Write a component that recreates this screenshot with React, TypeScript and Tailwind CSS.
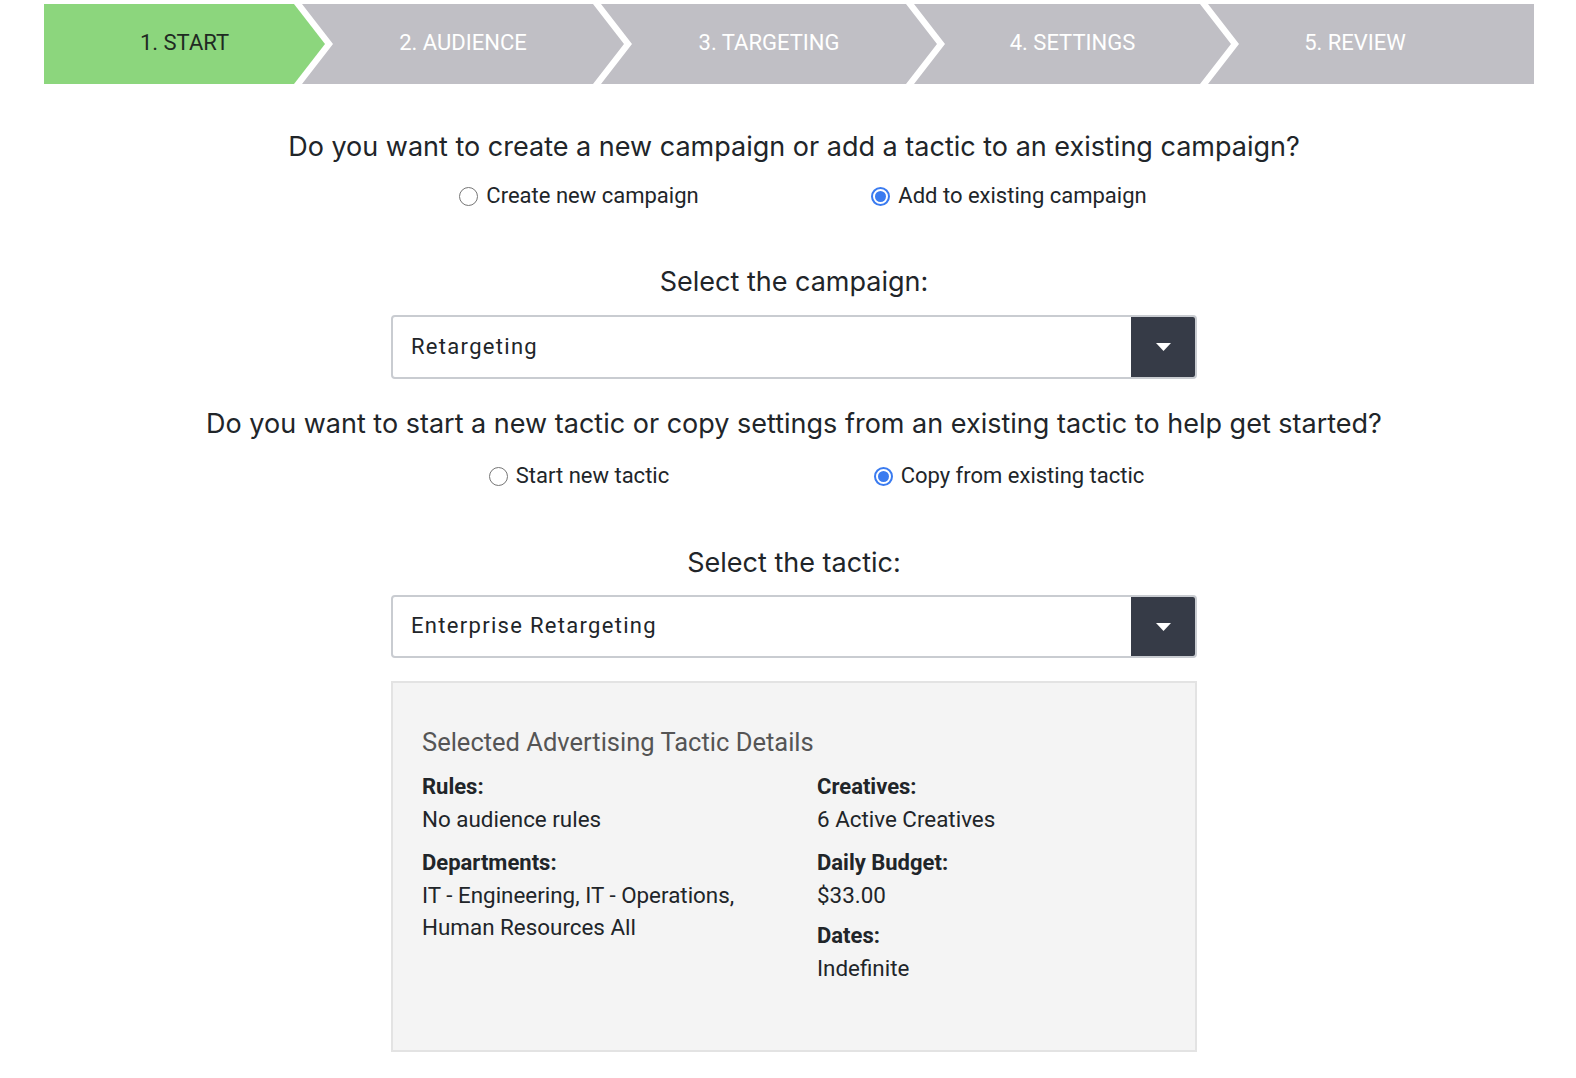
import React, { useState } from 'react';

type Step = { label: string; width: string; clip: string; extra: string };

const steps: Step[] = [
  {
    label: '1. START',
    width: 'w-[281px]',
    clip: '[clip-path:polygon(0_0,calc(100%-31px)_0,100%_50%,calc(100%-31px)_100%,0_100%)]',
    extra: 'bg-[#8cd67d] text-[#1f2a22]',
  },
  {
    label: '2. AUDIENCE',
    width: 'w-[322px] -ml-[23px]',
    clip: '[clip-path:polygon(0_0,calc(100%-31px)_0,100%_50%,calc(100%-31px)_100%,0_100%,31px_50%)]',
    extra: 'bg-[#c0bfc5] text-white',
  },
  {
    label: '3. TARGETING',
    width: 'w-[336px] -ml-[23px]',
    clip: '[clip-path:polygon(0_0,calc(100%-31px)_0,100%_50%,calc(100%-31px)_100%,0_100%,31px_50%)]',
    extra: 'bg-[#c0bfc5] text-white',
  },
  {
    label: '4. SETTINGS',
    width: 'w-[317px] -ml-[23px]',
    clip: '[clip-path:polygon(0_0,calc(100%-31px)_0,100%_50%,calc(100%-31px)_100%,0_100%,31px_50%)]',
    extra: 'bg-[#c0bfc5] text-white',
  },
  {
    label: '5. REVIEW',
    width: 'flex-1 -ml-[23px] pr-[32px]',
    clip: '[clip-path:polygon(0_0,100%_0,100%_100%,0_100%,31px_50%)]',
    extra: 'bg-[#c0bfc5] text-white',
  },
];

const Radio: React.FC<{ checked: boolean; label: string; onClick: () => void }> = ({
  checked,
  label,
  onClick,
}) => (
  <button type="button" onClick={onClick} className="flex items-center gap-[8px]">
    {checked ? (
      <span className="w-[19px] h-[19px] rounded-full border-[2px] border-[#3a7bf0] flex items-center justify-center bg-white">
        <span className="w-[11px] h-[11px] rounded-full bg-[#3a7bf0]" />
      </span>
    ) : (
      <span className="w-[19px] h-[19px] rounded-full border-[1.5px] border-[#767676] bg-white" />
    )}
    <span className="text-[22px] leading-[30px] text-[#212529]">{label}</span>
  </button>
);

const Dropdown: React.FC<{ value: string; height: string }> = ({ value, height }) => (
  <div
    className={`w-[806px] ${height} border-[2px] border-[#c9ccd1] rounded-[4px] flex items-stretch bg-white overflow-hidden`}
  >
    <div className="flex-1 flex items-center pl-[18px] pb-[2px] text-[22px] tracking-[1.3px] text-[#212529]">
      {value}
    </div>
    <div className="w-[64px] bg-[#363b47] flex items-center justify-center">
      <svg width="15" height="8" viewBox="0 0 15 8">
        <path d="M0 0 L15 0 L7.5 8 Z" fill="#ffffff" />
      </svg>
    </div>
  </div>
);

const Field: React.FC<{ label: string; lines: string[]; className?: string }> = ({
  label,
  lines,
  className = '',
}) => (
  <div className={className}>
    <div className="text-[22px] leading-[32px] font-bold text-[#212529]">{label}</div>
    {lines.map((l) => (
      <div key={l} className="text-[22.4px] leading-[32px] text-[#212529]">
        {l}
      </div>
    ))}
  </div>
);

const App: React.FC = () => {
  const [campaignMode, setCampaignMode] = useState('existing');
  const [tacticMode, setTacticMode] = useState('copy');

  return (
    <div className="min-h-screen bg-white font-['Roboto',sans-serif]">
      <div className="pt-[4px] pl-[44px] pr-[42px]">
        <div className="flex h-[80px]">
          {steps.map((s) => (
            <div
              key={s.label}
              className={`${s.width} ${s.clip} ${s.extra} shrink-0 flex items-center justify-center pb-[4px] text-[22px]`}
            >
              {s.label}
            </div>
          ))}
        </div>
      </div>

      <div className="flex flex-col items-center pl-[12px]">
        <h2 className="mt-[45px] text-[27px] leading-[36px] text-[#212529] font-['Inter',sans-serif]">
          Do you want to create a new campaign or add a tactic to an existing campaign?
        </h2>
        <div className="mt-[16px] w-[860px] grid grid-cols-2">
          <div className="flex justify-center">
            <Radio
              checked={campaignMode === 'new'}
              label="Create new campaign"
              onClick={() => setCampaignMode('new')}
            />
          </div>
          <div className="flex justify-center">
            <Radio
              checked={campaignMode === 'existing'}
              label="Add to existing campaign"
              onClick={() => setCampaignMode('existing')}
            />
          </div>
        </div>

        <h3 className="mt-[53px] text-[27px] leading-[36px] text-[#212529] font-['Inter',sans-serif]">
          Select the campaign:
        </h3>
        <div className="mt-[15px]">
          <Dropdown value="Retargeting" height="h-[64px]" />
        </div>

        <h2 className="mt-[27px] text-[27px] leading-[36px] text-[#212529] font-['Inter',sans-serif]">
          Do you want to start a new tactic or copy settings from an existing tactic to help get started?
        </h2>
        <div className="mt-[19px] w-[860px] grid grid-cols-2">
          <div className="flex justify-center">
            <Radio
              checked={tacticMode === 'new'}
              label="Start new tactic"
              onClick={() => setTacticMode('new')}
            />
          </div>
          <div className="flex justify-center">
            <Radio
              checked={tacticMode === 'copy'}
              label="Copy from existing tactic"
              onClick={() => setTacticMode('copy')}
            />
          </div>
        </div>

        <h3 className="mt-[54px] text-[27px] leading-[36px] text-[#212529] font-['Inter',sans-serif]">
          Select the tactic:
        </h3>
        <div className="mt-[14px]">
          <Dropdown value="Enterprise Retargeting" height="h-[63px]" />
        </div>

        <div className="mt-[23px] w-[806px] h-[371px] bg-[#f4f4f4] border-[2px] border-[#e3e3e3] pt-[43px] px-[29px]">
          <div className="text-[25.5px] leading-[32px] text-[#555555]">
            Selected Advertising Tactic Details
          </div>
          <div className="mt-[13px] grid grid-cols-[395px_1fr]">
            <div className="flex flex-col gap-[12px]">
              <Field label="Rules:" lines={['No audience rules']} />
              <Field
                label="Departments:"
                lines={['IT - Engineering, IT - Operations,', 'Human Resources All']}
              />
            </div>
            <div className="flex flex-col">
              <Field label="Creatives:" lines={['6 Active Creatives']} />
              <Field className="mt-[12px]" label="Daily Budget:" lines={['$33.00']} />
              <Field className="mt-[9px]" label="Dates:" lines={['Indefinite']} />
            </div>
          </div>
        </div>
      </div>
    </div>
  );
};

export default App;
